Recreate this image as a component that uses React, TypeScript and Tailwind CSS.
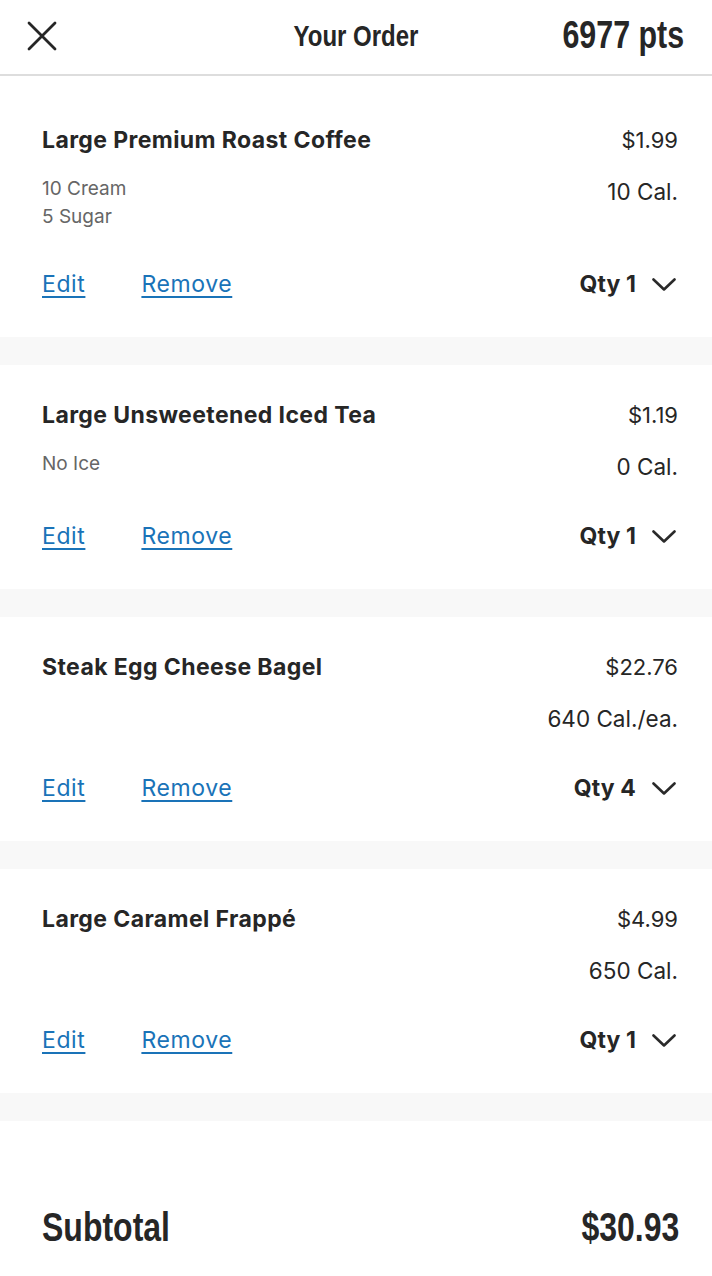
import { Fragment } from 'react';

type Item = {
  name: string;
  price: string;
  cal: string;
  mods: string[];
  qty: number;
};

const ITEMS: Item[] = [
  { name: 'Large Premium Roast Coffee', price: '$1.99', cal: '10 Cal.', mods: ['10 Cream', '5 Sugar'], qty: 1 },
  { name: 'Large Unsweetened Iced Tea', price: '$1.19', cal: '0 Cal.', mods: ['No Ice'], qty: 1 },
  { name: 'Steak Egg Cheese Bagel', price: '$22.76', cal: '640 Cal./ea.', mods: [], qty: 4 },
  { name: 'Large Caramel Frappé', price: '$4.99', cal: '650 Cal.', mods: [], qty: 1 },
];

const body = { fontFamily: 'Inter, "Liberation Sans", sans-serif' };
const narrow = { fontFamily: '"Liberation Sans", Arial, sans-serif' };

function Chevron() {
  return (
    <svg width="24" height="13" viewBox="0 0 24 13" fill="none" className="mr-[2px]">
      <path d="M1.5 1.5l10.5 10 10.5-10" stroke="#2a2a2a" strokeWidth="2.6" strokeLinecap="round" strokeLinejoin="round" />
    </svg>
  );
}

function OrderItem({ item, first }: { item: Item; first: boolean }) {
  return (
    <div className={`bg-white pl-[42px] pr-[34px] ${first ? 'pt-[50px]' : 'pt-[36px]'} pb-[39px]`}>
      <div className="flex h-[28px] items-center justify-between">
        <span className="text-[23px] font-bold tracking-[0.4px] text-[#262626]">{item.name}</span>
        <span className="text-[22px] text-[#262626]">{item.price}</span>
      </div>
      <div className="mt-[24px] flex items-start justify-between">
        <div className="-mt-[3px] flex flex-col">
          {item.mods.map((m) => (
            <span key={m} className="text-[19px] leading-[28px] text-[#666]">{m}</span>
          ))}
        </div>
        <span className="text-[22.5px] leading-[28px] text-[#262626]">{item.cal}</span>
      </div>
      <div className={`${item.mods.length > 1 ? 'mt-[39px]' : 'mt-[41px]'} flex h-[28px] items-center justify-between`}>
        <div className="flex items-center gap-[56px]">
          <a href="#" className="text-[23px] tracking-[0.6px] text-[#1a73b8] underline decoration-[1.5px] underline-offset-[4px]">Edit</a>
          <a href="#" className="text-[23px] tracking-[0.6px] text-[#1a73b8] underline decoration-[1.5px] underline-offset-[4px]">Remove</a>
        </div>
        <div className="flex items-center gap-[16px]">
          <span className="text-[23px] font-bold tracking-[0.1px] text-[#262626]">Qty {item.qty}</span>
          <Chevron />
        </div>
      </div>
    </div>
  );
}

export default function App() {
  return (
    <div className="min-h-[1276px] w-[712px] bg-white" style={body}>
      {/* Header */}
      <div className="relative flex h-[76px] items-center justify-between border-b-2 border-[#dddddd] pb-[3px] pl-[27px] pr-[28px]">
        <button type="button" className="flex h-[30px] w-[30px] items-center justify-center">
          <svg width="30" height="30" viewBox="0 0 30 30" fill="none">
            <path d="M2 2l26 26M28 2L2 28" stroke="#262626" strokeWidth="2.8" strokeLinecap="round" />
          </svg>
        </button>
        <span
          className="absolute left-1/2 inline-block -translate-x-1/2 scale-x-[0.8] text-[30px] font-bold text-[#262626]"
          style={narrow}
        >
          Your Order
        </span>
        <span className="inline-block origin-right scale-x-[0.8] text-[38px] font-bold text-[#262626]" style={narrow}>
          6977 pts
        </span>
      </div>

      {ITEMS.map((item, i) => (
        <Fragment key={i}>
          <OrderItem item={item} first={i === 0} />
          <div className="h-[28px] bg-[#f8f8f8]" />
        </Fragment>
      ))}

      {/* Subtotal */}
      <div className="flex items-center justify-between pl-[42px] pr-[33px] pt-[76px]">
        <span className="inline-block origin-left scale-x-[0.8] text-[40px] font-bold text-[#262626]" style={narrow}>
          Subtotal
        </span>
        <span className="inline-block origin-right scale-x-[0.8] text-[40px] font-bold text-[#262626]" style={narrow}>
          $30.93
        </span>
      </div>
    </div>
  );
}
